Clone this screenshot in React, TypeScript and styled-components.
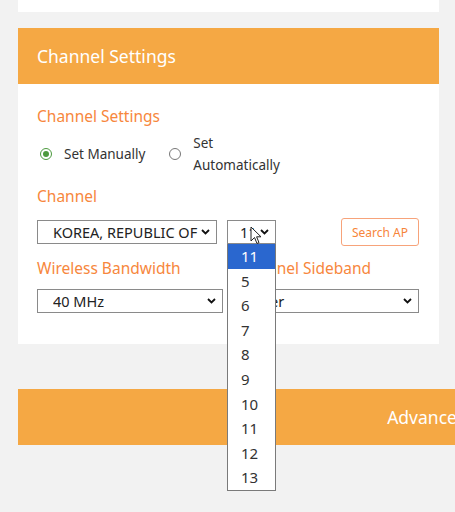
import React from 'react';
import styled, { createGlobalStyle } from 'styled-components';

const GlobalStyle = createGlobalStyle`
  html, body {
    margin: 0;
    padding: 0;
    overflow: hidden;
    background: #f2f2f2;
  }
  body {
    font-family: "Noto Sans", "Open Sans", Arial, sans-serif;
  }
`;

const Page = styled.div`
  width: 455px;
  height: 512px;
  padding-left: 18px;
  box-sizing: border-box;
  display: flex;
  flex-direction: column;
  gap: 16px;
  overflow: hidden;
`;

const PrevCardTail = styled.div`
  width: 421px;
  height: 12px;
  background: #fff;
`;

const Card = styled.section`
  width: 421px;
  background: #fff;
`;

const CardHeader = styled.div`
  height: 56px;
  background: #f5a844;
  color: #fff;
  font-size: 17.5px;
  display: flex;
  align-items: center;
  padding-left: 19px;
`;

const CardBody = styled.div`
  padding: 22px 20px 31px 19px;
  display: flex;
  flex-direction: column;
`;

const FieldLabel = styled.div<{ $mt?: number; $w?: number }>`
  color: #f7873d;
  font-size: 15.5px;
  line-height: 20px;
  margin-top: ${p => p.$mt ?? 0}px;
  ${p => (p.$w ? `width: ${p.$w}px; flex-shrink: 0;` : '')}
  white-space: nowrap;
`;

const RadioRow = styled.div`
  display: flex;
  align-items: center;
  margin-top: 6px;
  margin-left: 3px;
  gap: 24px;
`;

const RadioOption = styled.label`
  display: flex;
  align-items: center;
  gap: 12px;
  font-size: 13.5px;
  color: #333;
  line-height: 22px;
`;

const RadioDot = styled.span<{ $checked?: boolean }>`
  width: 12px;
  height: 12px;
  border-radius: 50%;
  box-sizing: border-box;
  border: 1px solid ${p => (p.$checked ? '#4c9a3e' : '#777')};
  display: flex;
  align-items: center;
  justify-content: center;
  &::after {
    content: '';
    width: 6px;
    height: 6px;
    border-radius: 50%;
    background: ${p => (p.$checked ? '#4c9a3e' : 'transparent')};
  }
`;

const SelectRow = styled.div<{ $mt: number }>`
  display: flex;
  align-items: center;
  margin-top: ${p => p.$mt}px;
`;

const Select = styled.div<{ $w: number; $pl?: number; $ml?: number }>`
  position: relative;
  width: ${p => p.$w}px;
  height: 24px;
  margin-left: ${p => p.$ml ?? 0}px;
  box-sizing: border-box;
  border: 1px solid #8a8a8a;
  background: #fff;
  display: flex;
  align-items: center;
  gap: 3px;
  padding-left: ${p => p.$pl ?? 15}px;
  padding-right: 6px;
  font-size: 14.5px;
  color: #222;
  white-space: nowrap;
`;

const SelectText = styled.span`
  flex: 1;
  overflow: hidden;
`;

const Chevron = () => (
  <svg width="9" height="6" viewBox="0 0 9 6">
    <path d="M1 1 L4.5 4.5 L8 1" fill="none" stroke="#111" strokeWidth="1.8" />
  </svg>
);

const SearchButton = styled.button`
  margin-left: auto;
  height: 28px;
  width: 78px;
  background: #fff;
  border: 1px solid #f7a37a;
  border-radius: 3px;
  color: #f7853a;
  font-family: inherit;
  font-size: 12px;
  padding: 0;
`;

const DropList = styled.ul`
  position: absolute;
  top: 23px;
  left: -1px;
  width: 49px;
  margin: 0;
  padding: 0;
  list-style: none;
  background: #fff;
  border: 1px solid #7a7a7a;
  border-top: none;
  box-sizing: border-box;
  z-index: 5;
`;

const DropItem = styled.li<{ $active?: boolean }>`
  height: 24.6px;
  line-height: 24.6px;
  padding-left: 13px;
  font-size: 15px;
  color: ${p => (p.$active ? '#fff' : '#333')};
  background: ${p => (p.$active ? '#2a67cf' : 'transparent')};
`;

const Pointer = styled.svg`
  position: absolute;
  left: 22px;
  top: 5px;
  z-index: 6;
`;

const AdvancedBar = styled.div`
  width: 890px;
  height: 56px;
  margin-top: 29px;
  flex-shrink: 0;
  background: #f5a844;
  color: #fff;
  font-size: 17.5px;
  display: flex;
  align-items: center;
  justify-content: center;
`;

const channels = ['11', '5', '6', '7', '8', '9', '10', '11', '12', '13'];

export default function App() {
  return (
    <>
      <GlobalStyle />
      <Page>
        <PrevCardTail />
        <Card>
          <CardHeader>Channel Settings</CardHeader>
          <CardBody>
            <FieldLabel>Channel Settings</FieldLabel>
            <RadioRow>
              <RadioOption>
                <RadioDot $checked />
                Set Manually
              </RadioOption>
              <RadioOption>
                <RadioDot />
                <span>
                  Set
                  <br />
                  Automatically
                </span>
              </RadioOption>
            </RadioRow>
            <FieldLabel $mt={10}>Channel</FieldLabel>
            <SelectRow $mt={12}>
              <Select $w={180}>
                <SelectText>KOREA, REPUBLIC OF</SelectText>
                <Chevron />
              </Select>
              <Select $w={49} $pl={12} $ml={10}>
                <SelectText>11</SelectText>
                <Chevron />
                <DropList>
                  {channels.map((c, i) => (
                    <DropItem key={i} $active={i === 0}>
                      {c}
                    </DropItem>
                  ))}
                </DropList>
                <Pointer width="12" height="19" viewBox="0 0 12 19">
                  <path
                    d="M1 1 L1 15 L4.5 11.5 L7 17.5 L9 16.6 L6.6 10.8 L11 10.8 Z"
                    fill="#fff"
                    stroke="#222"
                    strokeWidth="1"
                    strokeLinejoin="round"
                  />
                </Pointer>
              </Select>
              <SearchButton>Search AP</SearchButton>
            </SelectRow>
            <SelectRow $mt={12}>
              <FieldLabel $w={202}>Wireless Bandwidth</FieldLabel>
              <FieldLabel>Channel Sideband</FieldLabel>
            </SelectRow>
            <SelectRow $mt={11}>
              <Select $w={186}>
                <SelectText>40 MHz</SelectText>
                <Chevron />
              </Select>
              <Select $w={192} $pl={13} $ml={5}>
                <SelectText>Upper</SelectText>
                <Chevron />
              </Select>
            </SelectRow>
          </CardBody>
        </Card>
        <AdvancedBar>Advanced Settings</AdvancedBar>
      </Page>
    </>
  );
}
